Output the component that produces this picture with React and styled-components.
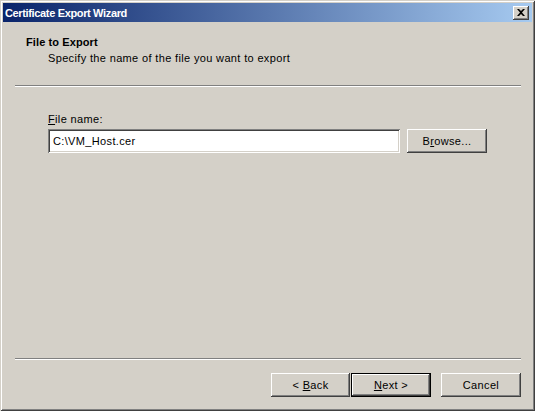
import React from 'react'
import styled, { createGlobalStyle } from 'styled-components'

const GlobalStyle = createGlobalStyle`
  html, body {
    margin: 0;
    padding: 0;
    background: #d4d0c8;
  }
  body {
    font-family: "Liberation Sans", Arial, sans-serif;
    font-size: 11px;
    letter-spacing: 0.35px;
    color: #000;
  }
`

const Window = styled.div`
  box-sizing: border-box;
  width: 535px;
  height: 411px;
  padding: 3px;
  background: #d4d0c8;
  display: flex;
  flex-direction: column;
  box-shadow:
    inset 1px 1px #d4d0c8,
    inset -1px -1px #404040,
    inset 2px 2px #ffffff,
    inset -2px -2px #808080;
`

const TitleBar = styled.div`
  height: 19px;
  flex: none;
  display: flex;
  align-items: center;
  justify-content: space-between;
  padding: 0 3px 0 2px;
  background: linear-gradient(to right, #0a246a, #a6caf0);
`

const Title = styled.span`
  color: #fff;
  font-weight: bold;
  font-size: 11px;
  letter-spacing: -0.35px;
`

const CloseButton = styled.div`
  width: 16px;
  height: 14px;
  display: flex;
  align-items: center;
  justify-content: center;
  background: #d4d0c8;
  box-shadow:
    inset -1px -1px #404040,
    inset 1px 1px #ffffff,
    inset -2px -2px #808080;
`

const Header = styled.div`
  height: 63px;
  flex: none;
  box-sizing: border-box;
  padding: 14px 0 0 23px;
`

const HeaderTitle = styled.div`
  font-weight: bold;
  line-height: 13px;
  letter-spacing: 0.1px;
`

const HeaderText = styled.div`
  line-height: 13px;
  margin-top: 3px;
  padding-left: 22px;
`

const Separator = styled.div`
  flex: none;
  height: 0;
  margin: 0 11px 0 12px;
  border-top: 1px solid #808080;
  border-bottom: 1px solid #ffffff;
`

const Body = styled.div`
  flex: 1;
  padding: 26px 0 0 45px;
`

const Label = styled.div`
  line-height: 13px;
  margin-bottom: 3px;
`

const Row = styled.div`
  display: flex;
  align-items: center;
  gap: 7px;
`

const Input = styled.div`
  box-sizing: border-box;
  width: 352px;
  height: 24px;
  padding: 0 5px;
  display: flex;
  align-items: center;
  background: #fff;
  box-shadow:
    inset 1px 1px #808080,
    inset -1px -1px #ffffff,
    inset 2px 2px #404040,
    inset -2px -2px #d4d0c8;
`

const Button = styled.div`
  box-sizing: border-box;
  width: ${p => p.$w || 80}px;
  height: 24px;
  display: flex;
  align-items: center;
  justify-content: center;
  background: #d4d0c8;
  white-space: pre;
  box-shadow: ${p =>
    p.$default
      ? 'inset 0 0 0 1px #000, inset -2px -2px #404040, inset 2px 2px #ffffff, inset -3px -3px #808080'
      : 'inset -1px -1px #404040, inset 1px 1px #ffffff, inset -2px -2px #808080'};
`

const Footer = styled.div`
  flex: none;
  display: flex;
  justify-content: flex-end;
  padding: 13px 11px 11px 0;
`

const Gap = styled.div`
  width: ${p => p.$w}px;
`

const Key = styled.span`
  text-decoration: underline;
`

const App = () => {
  return (
    <>
      <GlobalStyle />
      <Window>
        <TitleBar>
          <Title>Certificate Export Wizard</Title>
          <CloseButton>
            <svg width="8" height="7" viewBox="0 0 8 7">
              <path d="M0 0h2l2 2 2-2h2L5 3.5 8 7H6L4 5 2 7H0l3-3.5z" fill="#000" />
            </svg>
          </CloseButton>
        </TitleBar>
        <Header>
          <HeaderTitle>File to Export</HeaderTitle>
          <HeaderText>Specify the name of the file you want to export</HeaderText>
        </Header>
        <Separator />
        <Body>
          <Label><Key>F</Key>ile name:</Label>
          <Row>
            <Input>C:\VM_Host.cer</Input>
            <Button><span>B<Key>r</Key>owse...</span></Button>
          </Row>
        </Body>
        <Separator />
        <Footer>
          <Button $w={79}><span>&lt; <Key>B</Key>ack</span></Button>
          <Gap $w={1} />
          <Button $default>
            <span><Key>N</Key>ext &gt;</span>
          </Button>
          <Gap $w={10} />
          <Button>Cancel</Button>
        </Footer>
      </Window>
    </>
  )
}

export default App
